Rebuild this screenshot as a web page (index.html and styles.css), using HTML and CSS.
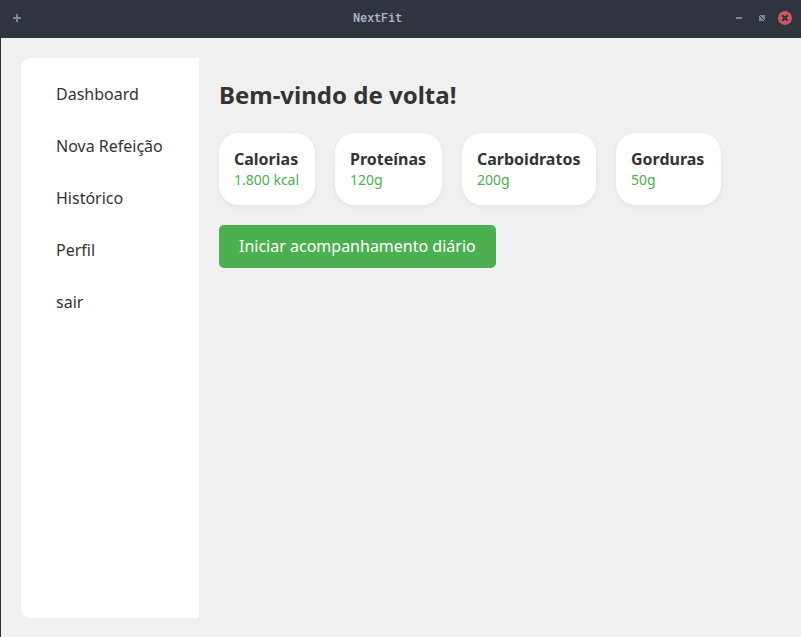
FILE: index.html
```html
<!DOCTYPE html>
<html lang="pt-BR">
<head>
<meta charset="utf-8">
<title>NextFit</title>
<link rel="stylesheet" href="styles.css">
</head>
<body>
<header class="titlebar">
  <svg class="add" width="8" height="8" viewBox="0 0 8 8" shape-rendering="crispEdges"><path d="M3 0h2v3h3v2H5v3H3V5H0V3h3z"/></svg>
  <span class="title">NextFit</span>
  <div class="controls">
    <svg width="6" height="8" viewBox="0 0 6 8" shape-rendering="crispEdges"><path d="M0 3h6v2H0z"/></svg>
    <svg width="6" height="6" viewBox="0 0 6 6" shape-rendering="crispEdges"><path d="M1 0h5v5H5V4H4V3H3V2H2V1H1zM0 1h1v1h1v1h1v1h1v1h1v1H0z"/></svg>
    <svg width="14" height="14" viewBox="0 0 14 14"><circle class="close" cx="7" cy="7" r="7"/><path class="cross" d="M4 4h2v1h2V4h2v2H9v2h1v2H8V9H6v1H4V8h1V6H4z"/></svg>
  </div>
</header>
<div class="window">
  <nav class="sidebar">
    <a>Dashboard</a>
    <a>Nova Refeição</a>
    <a>Histórico</a>
    <a>Perfil</a>
    <a>sair</a>
  </nav>
  <main class="content">
    <h1>Bem-vindo de volta!</h1>
    <section class="cards">
      <div class="card"><h2>Calorias</h2><p>1.800 kcal</p></div>
      <div class="card"><h2>Proteínas</h2><p>120g</p></div>
      <div class="card"><h2>Carboidratos</h2><p>200g</p></div>
      <div class="card"><h2>Gorduras</h2><p>50g</p></div>
    </section>
    <button class="start">Iniciar acompanhamento diário</button>
  </main>
</div>
</body>
</html>
```
FILE: styles.css
```css
* { box-sizing: border-box; margin: 0; padding: 0; }
body {
  height: 637px;
  display: flex;
  flex-direction: column;
  overflow: hidden;
  background: #f0f0f0;
  color: #333;
  font: 16px/22px "Noto Sans", sans-serif;
}
.titlebar {
  flex: none;
  height: 38px;
  padding: 0 9px 2px 13px;
  display: grid;
  grid-template-columns: 56px 1fr 56px;
  align-items: center;
  background: #2f343f;
  fill: #7c8499;
}
.titlebar svg { display: block; }
.title {
  justify-self: center;
  margin: 0 50px 2px 0;
  color: #afb8c6;
  font: 500 12px/16px "Roboto Mono", "Noto Sans Mono", "DejaVu Sans Mono", monospace;
  letter-spacing: -0.2px;
}
.controls { display: flex; align-items: center; gap: 17px; }
.controls svg:last-child { margin-left: -4px; }
.close { fill: #cc575d; }
.cross { fill: #2f343f; }
.window {
  flex: 1;
  display: flex;
  gap: 20px;
  padding: 20px 20px 19px;
  border-left: 1px solid #2f343f;
}
.sidebar {
  width: 178px;
  padding: 25px 35px;
  display: flex;
  flex-direction: column;
  gap: 30px;
  background: #fff;
  border-radius: 10px 0 0 10px;
  white-space: nowrap;
}
.content { display: flex; flex-direction: column; align-items: flex-start; padding-top: 20px; }
h1 { font-size: 24px; line-height: 33px; }
.cards {
  display: grid;
  grid-template-columns: 96px 107px 134px 105px;
  gap: 20px;
  margin: 22px 0 20px;
}
.card {
  height: 72px;
  padding: 15px;
  background: #fff;
  border-radius: 20px;
  box-shadow: 0 2px 5px rgba(0, 0, 0, 0.06);
  white-space: nowrap;
}
h2 { font-size: 16px; line-height: 22px; }
p { color: #4caf50; font-size: 14px; line-height: 20px; }
.start {
  height: 43px;
  padding: 0 20px 2px;
  border: 0;
  border-radius: 5px;
  background: #4caf50;
  color: #fff;
  font: inherit;
}
```
